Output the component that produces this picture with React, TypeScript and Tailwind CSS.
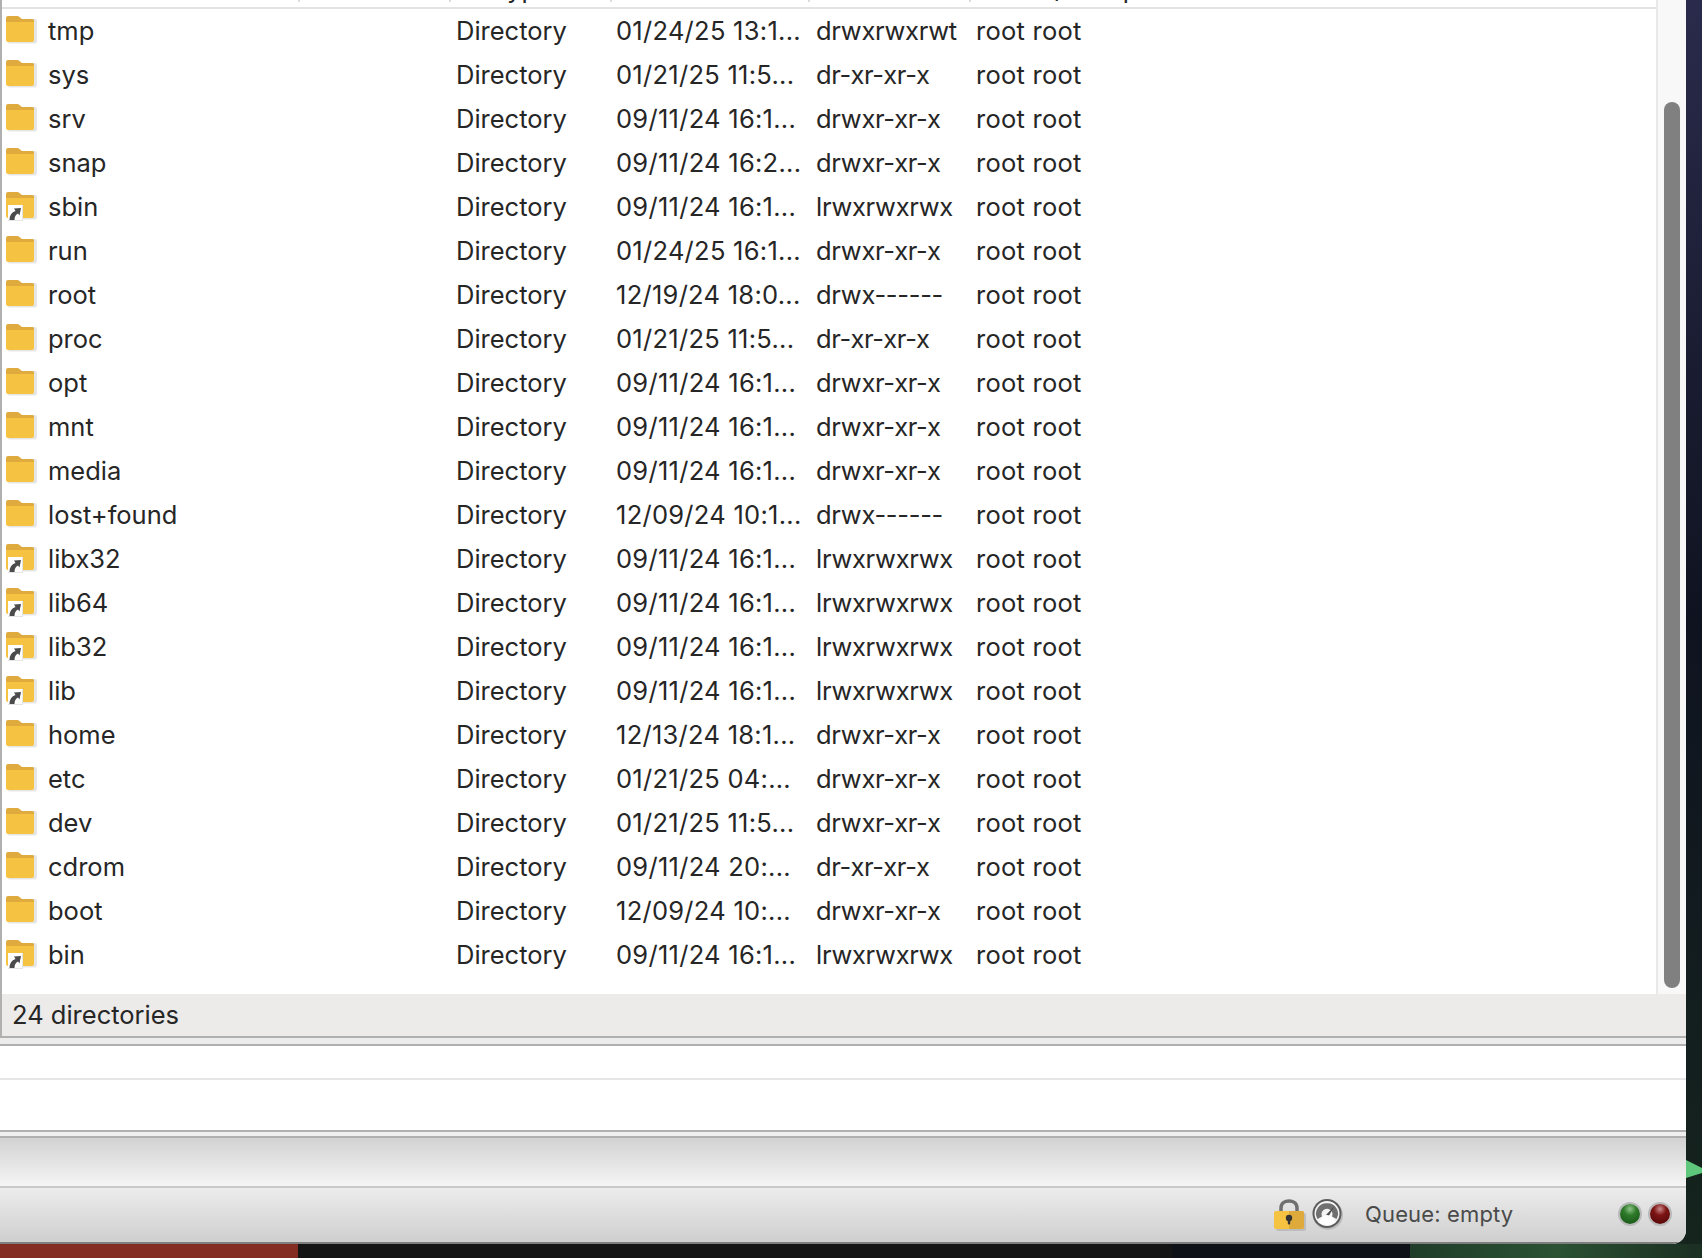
import React from 'react';

interface Entry {
    name: string;
    modified: string;
    perms: string;
    link?: boolean;
}

const entries: Entry[] = [
    { name: 'tmp', modified: '01/24/25 13:1...', perms: 'drwxrwxrwt' },
    { name: 'sys', modified: '01/21/25 11:5...', perms: 'dr-xr-xr-x' },
    { name: 'srv', modified: '09/11/24 16:1...', perms: 'drwxr-xr-x' },
    { name: 'snap', modified: '09/11/24 16:2...', perms: 'drwxr-xr-x' },
    { name: 'sbin', modified: '09/11/24 16:1...', perms: 'lrwxrwxrwx', link: true },
    { name: 'run', modified: '01/24/25 16:1...', perms: 'drwxr-xr-x' },
    { name: 'root', modified: '12/19/24 18:0...', perms: 'drwx------' },
    { name: 'proc', modified: '01/21/25 11:5...', perms: 'dr-xr-xr-x' },
    { name: 'opt', modified: '09/11/24 16:1...', perms: 'drwxr-xr-x' },
    { name: 'mnt', modified: '09/11/24 16:1...', perms: 'drwxr-xr-x' },
    { name: 'media', modified: '09/11/24 16:1...', perms: 'drwxr-xr-x' },
    { name: 'lost+found', modified: '12/09/24 10:1...', perms: 'drwx------' },
    { name: 'libx32', modified: '09/11/24 16:1...', perms: 'lrwxrwxrwx', link: true },
    { name: 'lib64', modified: '09/11/24 16:1...', perms: 'lrwxrwxrwx', link: true },
    { name: 'lib32', modified: '09/11/24 16:1...', perms: 'lrwxrwxrwx', link: true },
    { name: 'lib', modified: '09/11/24 16:1...', perms: 'lrwxrwxrwx', link: true },
    { name: 'home', modified: '12/13/24 18:1...', perms: 'drwxr-xr-x' },
    { name: 'etc', modified: '01/21/25 04:...', perms: 'drwxr-xr-x' },
    { name: 'dev', modified: '01/21/25 11:5...', perms: 'drwxr-xr-x' },
    { name: 'cdrom', modified: '09/11/24 20:...', perms: 'dr-xr-xr-x' },
    { name: 'boot', modified: '12/09/24 10:...', perms: 'drwxr-xr-x' },
    { name: 'bin', modified: '09/11/24 16:1...', perms: 'lrwxrwxrwx', link: true },
];

const FolderIcon = ({ link }: { link?: boolean }) => (
    <svg width="32" height="30" viewBox="0 0 32 30" className="shrink-0">
        <rect x="1.5" y="3" width="29.5" height="24.5" rx="2" fill="#e6e6e6" />
        <path d="M0 2 Q0 0 2 0 H12 L16 3 H26.5 Q28 3 28 4.5 V8 H0 Z" fill="#dfaa3e" />
        <path d="M0 6 H28 V24 Q28 26 26 26 H2 Q0 26 0 24 Z" fill="#f6c241" />
        {link && (
            <g>
                <rect x="2" y="13" width="15" height="16" fill="#e4e4e4" />
                <rect x="2" y="13" width="14" height="15" fill="#ffffff" />
                <path d="M3.5 28 Q3.5 21 9.5 19 L8 16.5 L15 16 L13.5 23.5 L12 21.5 Q8.5 23 8.5 28 Z" fill="#4b4b4b" />
            </g>
        )}
    </svg>
);

const LockIcon = () => (
    <svg width="32" height="33" viewBox="0 0 32 33" className="shrink-0">
        <path d="M7 14 V10 C7 0.5 23 0.5 23 10 V14" fill="none" stroke="#6f6f6f" strokeWidth="3.5" />
        <rect x="2" y="15" width="30" height="18" rx="2" fill="#bdbdbd" />
        <rect x="0" y="13" width="30" height="18" rx="2" fill="#f6c241" />
        <path d="M15 13 H28 Q30 13 30 15 V29 Q30 31 28 31 H15 Z" fill="#deaa3c" />
        <circle cx="15" cy="20" r="3.2" fill="#333333" />
        <rect x="13.8" y="20" width="2.4" height="6.5" rx="1" fill="#333333" />
    </svg>
);

const GaugeIcon = () => (
    <svg width="32" height="32" viewBox="0 0 32 32" className="shrink-0">
        <circle cx="16" cy="17" r="15" fill="#bcbcbc" />
        <circle cx="15" cy="15.5" r="14.5" fill="#5c5c5c" />
        <circle cx="15" cy="15.5" r="12.5" fill="#f4f4f4" />
        <path d="M5.5 21 A10.5 10.5 0 0 1 15 5.2 A10.5 10.5 0 0 1 24.5 21 L20 18.5 A5.5 5.5 0 1 0 10 18.5 Z" fill="#707070" />
        <path d="M14 17 L22.5 8 L16.5 18.5 Z" fill="#4c4c4c" />
        <path d="M7 25 L10 19 Q15 15 20 19 L23 25 Q15 29 7 25 Z" fill="#ffffff" />
    </svg>
);

export default function App() {
    return (
        <div className="relative flex h-[1258px] w-[1702px] flex-col overflow-hidden bg-[#16261f] font-['Inter',sans-serif] text-[25.5px] text-[#262626]">
            <div className="flex h-[1244px]">
                {/* Window */}
                <div className="flex h-full w-[1686px] flex-col overflow-hidden rounded-br-[14px] bg-white">
                    <div className="flex h-[1036px] flex-col border-l-2 border-[#b0b0b0]">
                        <div className="flex h-[994px]">
                            <div className="flex-1 bg-white">
                                {/* Header, scrolled almost out of view */}
                                <div className="h-[9px] overflow-hidden border-b-2 border-[#e3e3e3]">
                                    <div className="-mt-[30px] grid h-[32px] grid-cols-[298px_151px_161px_198px_161px_1fr] grid-rows-[32px] leading-[32px]">
                                        <div className="border-r-2 border-[#dcdcdc] pl-[46px] pt-[3px]">Filename</div>
                                        <div className="border-r-2 border-[#dcdcdc] pl-[5px] pt-[3px]">Filesize</div>
                                        <div className="border-r-2 border-[#dcdcdc] pl-[5px] pt-[3px]">Filetype</div>
                                        <div className="border-r-2 border-[#dcdcdc] pl-[5px] pt-[3px]">Last modified</div>
                                        <div className="border-r-2 border-[#dcdcdc] pl-[5px] pt-[3px]">Permissions</div>
                                        <div className="pl-[5px] pt-[3px]">Owner/Group</div>
                                    </div>
                                </div>
                                {entries.map((entry) => (
                                    <div key={entry.name} className="grid h-[44px] grid-cols-[449px_161px_198px_161px_1fr] items-center">
                                        <div className="flex items-center gap-[10px] pl-[4px]">
                                            <FolderIcon link={entry.link} />
                                            <span>{entry.name}</span>
                                        </div>
                                        <div className="pl-[5px]">Directory</div>
                                        <div className="truncate pl-[4px] tracking-[0.27px]">{entry.modified}</div>
                                        <div className="pl-[6px] tracking-[-0.3px]">{entry.perms}</div>
                                        <div className="pl-[5px] tracking-[0.25px]">root root</div>
                                    </div>
                                ))}
                            </div>
                            {/* Scrollbar */}
                            <div className="flex w-[30px] flex-col border-l-2 border-[#e8e8e8] bg-[#f8f8f8] pb-[6px] pl-[6px] pt-[102px]">
                                <div className="w-[16px] flex-1 rounded-full bg-[#808080]" />
                            </div>
                        </div>
                        <div className="flex h-[42px] items-center bg-[#ecebe9] pl-[10px]">24 directories</div>
                    </div>
                    <div className="h-[2px] bg-[#b0b0b0]" />
                    <div className="h-[6px] bg-[#ececec]" />
                    <div className="h-[2px] bg-[#b0b0b0]" />
                    {/* Log panes */}
                    <div className="h-[34px] border-b-2 border-[#e6e6e6] bg-white" />
                    <div className="h-[50px] bg-white" />
                    <div className="h-[2px] bg-[#b0b0b0]" />
                    <div className="h-[4px] bg-[#efefef]" />
                    <div className="h-[2px] bg-[#b0b0b0]" />
                    <div className="h-[48px] bg-gradient-to-b from-[#d2d2d2] to-[#f5f5f5]" />
                    <div className="h-[2px] bg-[#c9c9c9]" />
                    {/* Status strip */}
                    <div className="flex h-[54px] items-center justify-end bg-gradient-to-b from-[#ececec] to-[#cfcfcf] pb-[2px] pr-[16px] text-[22px] text-[#4a4a4a]">
                        <LockIcon />
                        <div className="ml-[6px]">
                            <GaugeIcon />
                        </div>
                        <div className="ml-[21px] w-[255px] tracking-[0.15px]">Queue: empty</div>
                        <div className="h-[20px] w-[20px] rounded-full bg-[radial-gradient(circle_at_50%_25%,#8fc48a_0%,#2f7a2a_35%,#134f13_100%)] shadow-[0_0_0_2px_#b9b9b9]" />
                        <div className="ml-[10px] h-[20px] w-[20px] rounded-full bg-[radial-gradient(circle_at_50%_25%,#c98a8a_0%,#7d1414_35%,#4d0606_100%)] shadow-[0_0_0_2px_#b9b9b9]" />
                    </div>
                    <div className="h-[2px] bg-[#7e7e7e]" />
                </div>
                {/* Wallpaper, right edge */}
                <div className="relative w-[16px] bg-gradient-to-b from-[#2a2b4c] via-[#0f1320] to-[#15241d]">
                    <svg width="16" height="24" viewBox="0 0 16 24" className="absolute left-0 top-[1158px]">
                        <path d="M0 2 L16 10 V15 L0 20 Z" fill="#5fc77c" />
                    </svg>
                </div>
            </div>
            {/* Wallpaper, bottom edge */}
            <div className="flex h-[14px]">
                <div className="w-[298px] bg-[#842c22]" />
                <div className="w-[874px] bg-[#141414]" />
                <div className="w-[238px] bg-[#0e1218]" />
                <div className="flex-1 bg-gradient-to-r from-[#1f3d2a] via-[#2a5233] to-[#1b2f22]" />
            </div>
        </div>
    );
}
